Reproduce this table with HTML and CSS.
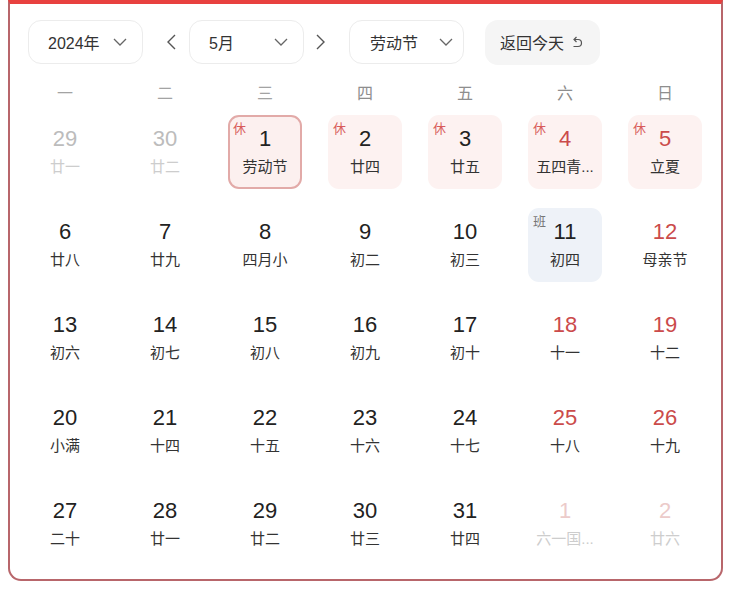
FILE: index.html
```html
<!DOCTYPE html>
<html lang="zh-CN">
<head>
<meta charset="utf-8">
<title>2024年5月 日历</title>
<link rel="stylesheet" href="styles.css">
</head>
<body>
<div class="calendar">
  <div class="toolbar">
    <div class="select year">
      <span>2024年</span>
      <svg class="caret" viewBox="0 0 14 8"><path d="M1 1l6 6 6-6"/></svg>
    </div>
    <button class="arrow prev" aria-label="上个月">
      <svg viewBox="0 0 10 16"><path d="M9 1L2 8l7 7"/></svg>
    </button>
    <div class="select month">
      <span>5月</span>
      <svg class="caret" viewBox="0 0 14 8"><path d="M1 1l6 6 6-6"/></svg>
    </div>
    <button class="arrow next" aria-label="下个月">
      <svg viewBox="0 0 10 16"><path d="M1 1l7 7-7 7"/></svg>
    </button>
    <div class="select holiday">
      <span>劳动节</span>
      <svg class="caret" viewBox="0 0 14 8"><path d="M1 1l6 6 6-6"/></svg>
    </div>
    <button class="today">
      <span>返回今天</span>
      <svg class="undo" viewBox="0 0 12 14"><path d="M3.5 4.5H7a3.5 3.5 0 0 1 0 7H2.5"/><path d="M5.5 2L3 4.5 5.5 7"/></svg>
    </button>
  </div>

  <div class="weekdays">
    <span>一</span><span>二</span><span>三</span><span class="dark">四</span><span class="dark">五</span><span class="dark">六</span><span class="dark">日</span>
  </div>

  <div class="days">
    <div class="day other"><div class="num">29</div><div class="lunar">廿一</div></div>
    <div class="day other"><div class="num">30</div><div class="lunar">廿二</div></div>
    <div class="day rest selected"><span class="tag">休</span><div class="num">1</div><div class="lunar">劳动节</div></div>
    <div class="day rest"><span class="tag">休</span><div class="num">2</div><div class="lunar">廿四</div></div>
    <div class="day rest"><span class="tag">休</span><div class="num">3</div><div class="lunar">廿五</div></div>
    <div class="day rest weekend"><span class="tag">休</span><div class="num">4</div><div class="lunar" title="五四青年节">五四青...</div></div>
    <div class="day rest weekend"><span class="tag">休</span><div class="num">5</div><div class="lunar">立夏</div></div>

    <div class="day"><div class="num">6</div><div class="lunar">廿八</div></div>
    <div class="day"><div class="num">7</div><div class="lunar">廿九</div></div>
    <div class="day"><div class="num">8</div><div class="lunar">四月小</div></div>
    <div class="day"><div class="num">9</div><div class="lunar">初二</div></div>
    <div class="day"><div class="num">10</div><div class="lunar">初三</div></div>
    <div class="day work"><span class="tag">班</span><div class="num">11</div><div class="lunar">初四</div></div>
    <div class="day weekend"><div class="num">12</div><div class="lunar">母亲节</div></div>

    <div class="day"><div class="num">13</div><div class="lunar">初六</div></div>
    <div class="day"><div class="num">14</div><div class="lunar">初七</div></div>
    <div class="day"><div class="num">15</div><div class="lunar">初八</div></div>
    <div class="day"><div class="num">16</div><div class="lunar">初九</div></div>
    <div class="day"><div class="num">17</div><div class="lunar">初十</div></div>
    <div class="day weekend"><div class="num">18</div><div class="lunar">十一</div></div>
    <div class="day weekend"><div class="num">19</div><div class="lunar">十二</div></div>

    <div class="day"><div class="num">20</div><div class="lunar">小满</div></div>
    <div class="day"><div class="num">21</div><div class="lunar">十四</div></div>
    <div class="day"><div class="num">22</div><div class="lunar">十五</div></div>
    <div class="day"><div class="num">23</div><div class="lunar">十六</div></div>
    <div class="day"><div class="num">24</div><div class="lunar">十七</div></div>
    <div class="day weekend"><div class="num">25</div><div class="lunar">十八</div></div>
    <div class="day weekend"><div class="num">26</div><div class="lunar">十九</div></div>

    <div class="day"><div class="num">27</div><div class="lunar">二十</div></div>
    <div class="day"><div class="num">28</div><div class="lunar">廿一</div></div>
    <div class="day"><div class="num">29</div><div class="lunar">廿二</div></div>
    <div class="day"><div class="num">30</div><div class="lunar">廿三</div></div>
    <div class="day"><div class="num">31</div><div class="lunar">廿四</div></div>
    <div class="day other weekend"><div class="num">1</div><div class="lunar" title="六一国际儿童节">六一国...</div></div>
    <div class="day other weekend"><div class="num">2</div><div class="lunar">廿六</div></div>
  </div>
</div>
</body>
</html>
```

FILE: styles.css
```css
* { box-sizing: border-box; }

html, body { background: #ffffff; }

body {
  margin: 0 8px;
  font-family: "Liberation Sans", "Noto Sans CJK SC", sans-serif;
  color: #222;
}

.calendar {
  width: 715px;
  height: 581px;
  border: 2px solid #b8666b;
  border-top: 4px solid #e8413f;
  border-radius: 0 0 13px 13px;
  padding: 16px 6px 0 5px;
}

/* toolbar */
.toolbar {
  display: flex;
  align-items: center;
  height: 44px;
  padding-left: 13px;
}

.select {
  width: 115px;
  height: 44px;
  border: 1px solid #ececec;
  border-radius: 13px;
  display: flex;
  align-items: center;
  justify-content: space-between;
  padding: 0 15px 0 19px;
  font-size: 16px;
  color: #333;
}
.holiday { padding: 0 10px 0 20px; }

.caret {
  width: 14px;
  height: 8px;
  fill: none;
  stroke: #666;
  stroke-width: 1.3;
}

.arrow {
  border: 0;
  background: none;
  padding: 0;
  width: 12px;
  height: 18px;
  display: flex;
  align-items: center;
  justify-content: center;
}
.arrow svg {
  width: 10px;
  height: 16px;
  fill: none;
  stroke: #555;
  stroke-width: 1.4;
}
.prev { margin: 0 12px 0 22px; }
.next { margin: 0 22px 0 11px; }

.today {
  margin-left: 21px;
  width: 115px;
  height: 45px;
  border: 0;
  border-radius: 13px;
  background: #f5f5f5;
  display: flex;
  align-items: center;
  padding: 0 0 0 15px;
  font-family: inherit;
  font-size: 16px;
  color: #333;
}
.undo {
  width: 12px;
  height: 14px;
  margin-left: 7px;
  fill: none;
  stroke: #555;
  stroke-width: 1.2;
}

/* weekdays */
.weekdays {
  display: grid;
  grid-template-columns: repeat(7, 100px);
  margin-top: 19px;
  height: 22px;
  line-height: 22px;
  font-size: 16px;
  color: #a3a3a3;
  text-align: center;
}
.weekdays .dark { color: #8e8e8e; }

/* days */
.days {
  display: grid;
  grid-template-columns: repeat(7, 100px);
  grid-auto-rows: 74px;
  row-gap: 19px;
  margin-top: 10px;
}

.day {
  position: relative;
  width: 74px;
  height: 74px;
  justify-self: center;
  border-radius: 11px;
  padding-top: 10px;
  text-align: center;
}

.num {
  height: 28px;
  line-height: 28px;
  font-size: 22px;
  color: #222;
}

.lunar {
  height: 28px;
  line-height: 28px;
  font-size: 15px;
  color: #333;
  white-space: nowrap;
}

.tag {
  position: absolute;
  left: 5px;
  top: 6px;
  font-size: 13px;
  line-height: 16px;
  color: #d85c5a;
}

.rest { background: #fdf2f1; }
.selected {
  background: #fcf0ef;
  border: 2px solid #e2aaa8;
  padding-top: 8px;
}
.selected .tag { left: 3px; top: 4px; }

.work { background: #eef2f8; }
.work .tag { color: #777; }

.weekend .num { color: #cb4b4b; }

.other .num { color: #bcbcbc; }
.other .lunar { color: #cdcdcd; }
.other.weekend .num { color: #eccbca; }
```
